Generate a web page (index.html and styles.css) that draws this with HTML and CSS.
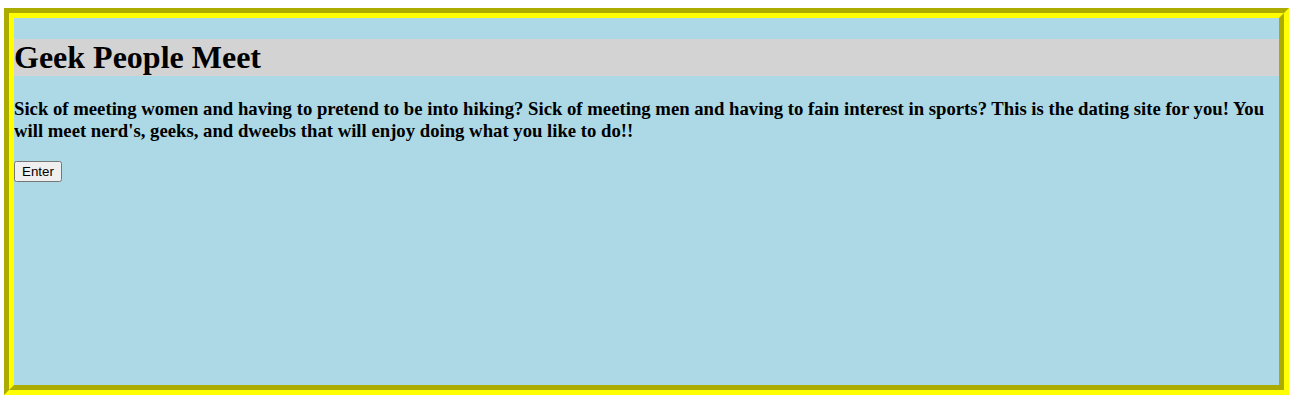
FILE: index.html
```html
<!DOCTYPE html>
<html>
<head>
<meta charset="utf-8">
<title>Geek People Meet</title>
<link rel="stylesheet" href="styles.css">
</head>
<body class="page">
<h1 class="title">Geek People Meet</h1>
<h3 class="intro">Sick of meeting women and having to pretend to be into hiking? Sick of meeting men and having to fain interest in sports? This is the dating site for you! You will meet nerd's, geeks, and dweebs that will enjoy doing what you like to do!!</h3>
<p class="entry"><button type="button" class="enter">Enter</button></p>
</body>
</html>
```
FILE: styles.css
```css
html {
  margin: 0;
  padding: 0;
  background: #ffffff;
}
.page {
  margin: 8px 8px 9px 4px;
  border: 10px groove yellow;
  background: lightblue;
  height: 367px;
  box-sizing: content-box;
  font-family: "Liberation Serif", "Times New Roman", serif;
}
.title {
  background: lightgray;
  margin: 21.44px 0;
  font-size: 32px;
}
.intro {
  font-size: 18.72px;
  margin: 18.72px 0;
}
.entry {
  margin: 16px 0;
  font-size: 16px;
}
.enter {
  font-family: "Liberation Sans", Arial, sans-serif;
  font-size: 13.33px;
}
```
